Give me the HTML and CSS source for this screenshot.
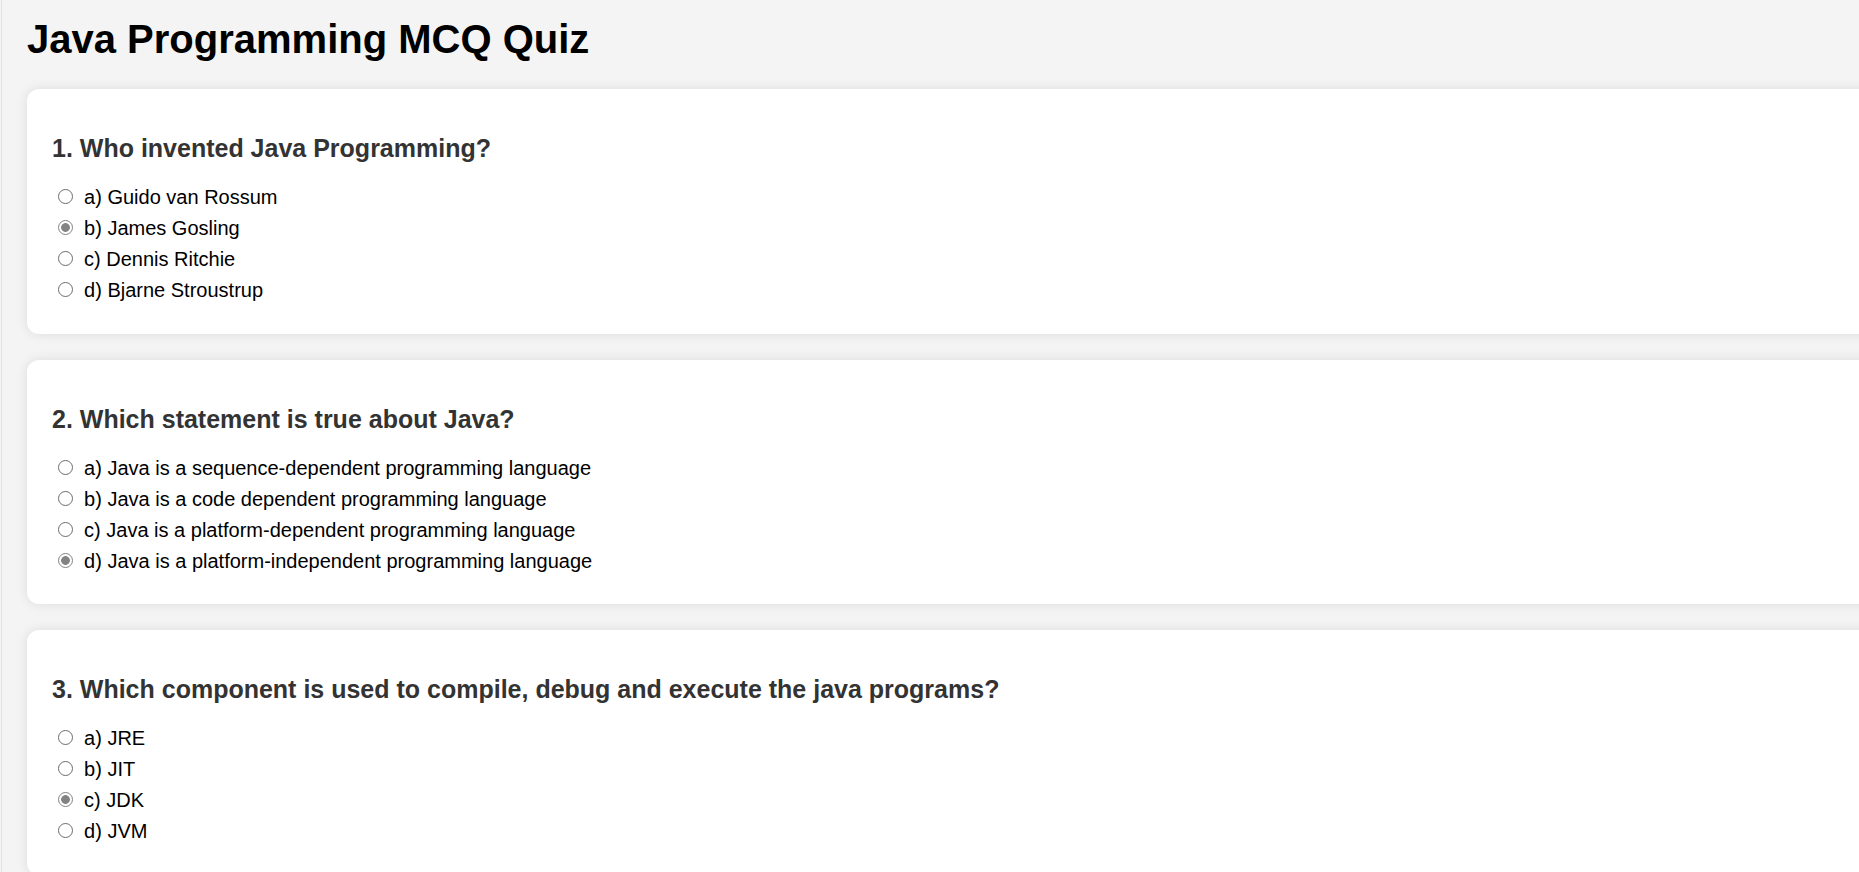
FILE: index.html
```html
<!DOCTYPE html>
<html lang="en">
<head>
<meta charset="utf-8">
<title>Java Programming MCQ Quiz</title>
<link rel="stylesheet" href="styles.css">
</head>
<body>
<div class="page">
  <h1 class="title">Java Programming MCQ Quiz</h1>

  <div class="question">
    <h3 class="question-text">1. Who invented Java Programming?</h3>
    <label class="option"><input type="radio" name="q1"> a) Guido van Rossum</label>
    <label class="option"><input type="radio" name="q1" checked> b) James Gosling</label>
    <label class="option"><input type="radio" name="q1"> c) Dennis Ritchie</label>
    <label class="option"><input type="radio" name="q1"> d) Bjarne Stroustrup</label>
  </div>

  <div class="question">
    <h3 class="question-text">2. Which statement is true about Java?</h3>
    <label class="option"><input type="radio" name="q2"> a) Java is a sequence-dependent programming language</label>
    <label class="option"><input type="radio" name="q2"> b) Java is a code dependent programming language</label>
    <label class="option"><input type="radio" name="q2"> c) Java is a platform-dependent programming language</label>
    <label class="option"><input type="radio" name="q2" checked> d) Java is a platform-independent programming language</label>
  </div>

  <div class="question">
    <h3 class="question-text">3. Which component is used to compile, debug and execute the java programs?</h3>
    <label class="option"><input type="radio" name="q3"> a) JRE</label>
    <label class="option"><input type="radio" name="q3"> b) JIT</label>
    <label class="option"><input type="radio" name="q3" checked> c) JDK</label>
    <label class="option"><input type="radio" name="q3"> d) JVM</label>
  </div>
</div>
</body>
</html>
```

FILE: styles.css
```css
html {
  background: #f4f4f4;
  overflow: hidden;
}

body {
  margin: 0;
  font-family: "Liberation Sans", Arial, sans-serif;
  color: #000;
}

.page {
  margin-left: 1px;
  border-left: 1px solid #e3e3e3;
  padding: 16px 0 0 25px;
  min-height: 100vh;
  box-sizing: border-box;
}

.title {
  margin: 0 0 27px;
  font-size: 40px;
  line-height: 46px;
  font-weight: bold;
  color: #000;
}

.question {
  background: #fff;
  border-radius: 12px;
  box-shadow: 0 0 12px rgba(0, 0, 0, 0.1);
  padding: 25px 25px 27.5px;
  margin: 0 -60px 26px 0;
}

.question-text {
  margin: 20px 0 19px;
  font-size: 25px;
  line-height: 29px;
  font-weight: bold;
  color: #333;
}

.option {
  display: flex;
  align-items: center;
  height: 31px;
  font-size: 20px;
  line-height: 31px;
  color: #000;
  white-space: pre;
}

.option input {
  appearance: none;
  -webkit-appearance: none;
  flex: none;
  width: 15px;
  height: 15px;
  margin: -2px 6px 0 5.5px;
  border: 1.5px solid #6c6c6c;
  border-radius: 50%;
  background: #fff;
  box-sizing: border-box;
}

.option input:checked {
  border-color: #838383;
  background: radial-gradient(circle, #838383 0 4px, #fff 4.7px);
}
```
